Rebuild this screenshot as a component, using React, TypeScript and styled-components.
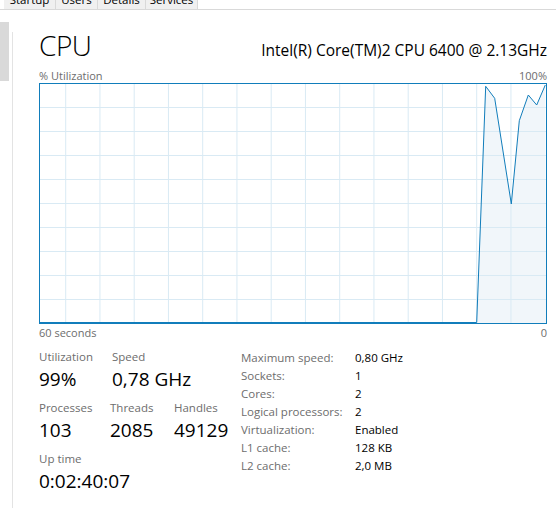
import { memo } from "react";
import styled, { createGlobalStyle } from "styled-components";

const GlobalStyle = createGlobalStyle`
  html, body {
    margin: 0;
    padding: 0;
    background: #fff;
    overflow: hidden;
  }
  body {
    font-family: "Open Sans", "Noto Sans", "Liberation Sans", sans-serif;
    color: #000;
  }
`

const StyledWindow = styled.div`
  width: 556px;
  height: 508px;
  overflow: hidden;
  display: flex;
  flex-direction: column;
`
const StyledTabBar = styled.div`
  display: flex;
  height: 9px;
  border-bottom: 1px solid #d9d9d9;
  overflow: hidden;
`
const StyledTabs = styled.div`
  display: flex;
  margin-top: -10px;
  padding-left: 4px;
  height: 19px;
`
const StyledTab = styled.div<{ $w: number }>`
  width: ${(p) => p.$w}px;
  display: flex;
  align-items: center;
  justify-content: center;
  background: #f0f0f0;
  border-right: 1px solid #d9d9d9;
  font-size: 11.5px;
  line-height: 19px;
  color: #000;
`
const StyledBody = styled.div`
  flex: 1;
  display: flex;
  padding-top: 12px;
`
const StyledSidebar = styled.div`
  width: 12px;
  flex-shrink: 0;
  position: relative;
  border-right: 1px solid #e3e3e3;
  margin-top: 10px;
`
const StyledSelected = styled.div`
  position: absolute;
  left: 0;
  top: -10px;
  width: 9px;
  height: 59px;
  background: #d9d9d9;
`
const StyledMain = styled.div`
  flex: 1;
  padding: 5px 9px 0 26px;
  display: flex;
  flex-direction: column;
`
const StyledHeader = styled.div`
  display: flex;
  align-items: baseline;
  justify-content: space-between;
  height: 42px;
`
const StyledTitle = styled.div`
  font-size: 28px;
  line-height: 37px;
  font-weight: 300;
  letter-spacing: -0.5px;
`
const StyledCpuName = styled.div`
  font-size: 15.5px;
`
const StyledAxis = styled.div<{ $gap?: number }>`
  display: flex;
  justify-content: space-between;
  margin-top: ${(p) => p.$gap ?? 0}px;
  font-size: 11px;
  line-height: 14px;
  color: #6d6d6d;
  height: 14px;
`
const StyledChart = styled.svg`
  display: block;
  width: 508px;
  height: 241px;
`
const StyledStats = styled.div`
  display: flex;
  margin-top: 9px;
`
const StyledLeftStats = styled.div`
  width: 202px;
  display: flex;
  flex-direction: column;
  gap: 7px;
`
const StyledStatRow = styled.div`
  display: flex;
`
const StyledStat = styled.div<{ $w: number }>`
  width: ${(p) => p.$w}px;
  display: flex;
  flex-direction: column;
`
const StyledStatLabel = styled.div`
  font-size: 11.5px;
  line-height: 16px;
  color: #6d6d6d;
  white-space: nowrap;
`
const StyledStatValue = styled.div`
  font-size: 19px;
  line-height: 28px;
  white-space: nowrap;
`
const StyledInfo = styled.div`
  display: grid;
  grid-template-columns: 114px auto;
  grid-auto-rows: 18.1px;
  align-items: center;
  font-size: 11.5px;
  margin-top: -1px;
`
const StyledInfoLabel = styled.div`
  color: #6d6d6d;
  white-space: nowrap;
`
const StyledInfoValue = styled.div`
  color: #000;
  white-space: nowrap;
`

const tabs: [string, number][] = [
  ["Startup", 51],
  ["Users", 41],
  ["Details", 47],
  ["Services", 51],
]

const points: [number, number][] = [
  [437.7, 239.5],
  [446.7, 3.3],
  [455.7, 15.3],
  [472.3, 121],
  [480.3, 37.7],
  [489.3, 12],
  [497.7, 22],
  [506.3, 2],
]

const info: [string, string][] = [
  ["Maximum speed:", "0,80 GHz"],
  ["Sockets:", "1"],
  ["Cores:", "2"],
  ["Logical processors:", "2"],
  ["Virtualization:", "Enabled"],
  ["L1 cache:", "128 KB"],
  ["L2 cache:", "2,0 MB"],
]

const Chart = () => {
  const vLines = Array.from({ length: 14 }, (_, i) => 26.7 + 34.25 * i)
  const hLines = Array.from({ length: 9 }, (_, i) => 24.5 + 24 * i)
  const line = "0.5,239.5 " + points.map(([x, y]) => `${x},${y}`).join(" ")
  const area = `437.7,240 ` + points.map(([x, y]) => `${x},${y}`).join(" ") + " 507,240"
  return (
    <StyledChart viewBox="0 0 508 241">
      <rect x="0" y="0" width="508" height="241" fill="#fff" />
      <polygon points={area} fill="#f1f6fa" />
      {vLines.map((x) => (
        <line key={x} x1={x} y1="0" x2={x} y2="241" stroke="#d9eaf4" strokeWidth="1" />
      ))}
      {hLines.map((y) => (
        <line key={y} x1="0" y1={y} x2="508" y2={y} stroke="#d9eaf4" strokeWidth="1" />
      ))}
      <polyline points={line} fill="none" stroke="#117dbb" strokeWidth="1" strokeLinejoin="round" />
      <rect x="0.5" y="0.5" width="507" height="240" fill="none" stroke="#117dbb" strokeWidth="1" />
    </StyledChart>
  )
}

export default memo(function App() {
  return (
    <StyledWindow>
      <GlobalStyle />
      <StyledTabBar>
        <StyledTabs>
          {tabs.map(([t, w]) => (
            <StyledTab key={t} $w={w}>{t}</StyledTab>
          ))}
        </StyledTabs>
      </StyledTabBar>
      <StyledBody>
        <StyledSidebar>
          <StyledSelected />
        </StyledSidebar>
        <StyledMain>
          <StyledHeader>
            <StyledTitle>CPU</StyledTitle>
            <StyledCpuName>Intel(R) Core(TM)2 CPU 6400 @ 2.13GHz</StyledCpuName>
          </StyledHeader>
          <StyledAxis>
            <span>% Utilization</span>
            <span>100%</span>
          </StyledAxis>
          <Chart />
          <StyledAxis $gap={2}>
            <span>60 seconds</span>
            <span>0</span>
          </StyledAxis>
          <StyledStats>
            <StyledLeftStats>
              <StyledStatRow>
                <StyledStat $w={73}>
                  <StyledStatLabel>Utilization</StyledStatLabel>
                  <StyledStatValue>99%</StyledStatValue>
                </StyledStat>
                <StyledStat $w={100}>
                  <StyledStatLabel>Speed</StyledStatLabel>
                  <StyledStatValue>0,78 GHz</StyledStatValue>
                </StyledStat>
              </StyledStatRow>
              <StyledStatRow>
                <StyledStat $w={71}>
                  <StyledStatLabel>Processes</StyledStatLabel>
                  <StyledStatValue>103</StyledStatValue>
                </StyledStat>
                <StyledStat $w={64}>
                  <StyledStatLabel>Threads</StyledStatLabel>
                  <StyledStatValue>2085</StyledStatValue>
                </StyledStat>
                <StyledStat $w={60}>
                  <StyledStatLabel>Handles</StyledStatLabel>
                  <StyledStatValue>49129</StyledStatValue>
                </StyledStat>
              </StyledStatRow>
              <StyledStatRow>
                <StyledStat $w={120}>
                  <StyledStatLabel>Up time</StyledStatLabel>
                  <StyledStatValue>0:02:40:07</StyledStatValue>
                </StyledStat>
              </StyledStatRow>
            </StyledLeftStats>
            <StyledInfo>
              {info.map(([l, v]) => (
                <>
                  <StyledInfoLabel key={l}>{l}</StyledInfoLabel>
                  <StyledInfoValue key={l + v}>{v}</StyledInfoValue>
                </>
              ))}
            </StyledInfo>
          </StyledStats>
        </StyledMain>
      </StyledBody>
    </StyledWindow>
  )
})
